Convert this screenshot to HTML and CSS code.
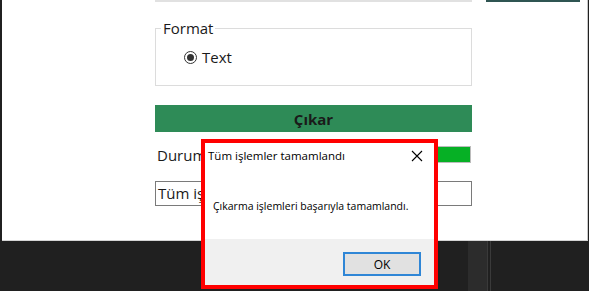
FILE: index.html
```html
<!DOCTYPE html>
<html lang="tr">
<head>
    <meta charset="UTF-8">
    <meta name="viewport" content="width=device-width, initial-scale=1.0">
    <title>Çıkar</title>
    <link rel="stylesheet" href="styles.css">
</head>
<body>

<div class="window">
    <div class="top-row">
        <div class="top-input"></div>
        <div class="top-button"></div>
    </div>

    <div class="form">
        <fieldset class="group">
            <legend>Format</legend>
            <label class="radio"><span class="radio-mark"></span>Text</label>
        </fieldset>

        <button class="extract">Çıkar</button>

        <div class="status-row">
            <span class="status-label">Durum</span>
            <div class="progress"><div class="progress-fill"></div></div>
        </div>

        <div class="log-box">Tüm işlemler tamamlandı</div>
    </div>
</div>

<div class="taskbar">
    <div class="task-slot"></div>
    <div class="task-line"></div>
    <div class="task-line"></div>
</div>

<div class="dialog">
    <div class="dialog-title">
        <span>Tüm işlemler tamamlandı</span>
        <svg class="close-icon" width="12" height="12" viewBox="0 0 12 12">
            <path d="M1 1 L11 11 M11 1 L1 11" stroke="#000" stroke-width="1.1" fill="none"/>
        </svg>
    </div>
    <div class="dialog-body">Çıkarma işlemleri başarıyla tamamlandı.</div>
    <div class="dialog-footer">
        <button class="ok-button">OK</button>
    </div>
</div>

</body>
</html>
```

FILE: styles.css
```css
body {
    margin: 0;
    background-color: #202020;
    font-family: "Open Sans", "Noto Sans", sans-serif;
    color: #1a1a1a;
    height: 291px;
    overflow: hidden;
}

.window {
    margin-left: 2px;
    width: 585px;
    height: 240px;
    background-color: white;
    border-right: 1px solid #c8c8c8;
    border-bottom: 1px solid #d4d4d4;
}

.top-row {
    display: flex;
    height: 2px;
    margin-left: 153px;
}

.top-input {
    width: 317px;
    background-color: #e1e1e1;
}

.top-button {
    width: 94px;
    margin-left: 14px;
    background-color: #2f5552;
}

.form {
    margin-left: 153px;
    width: 317px;
}

.group {
    margin: 18px 0 0 0;
    padding: 0 0 18px 0;
    border: 1px solid #dcdcdc;
}

.group legend {
    margin-left: 5px;
    padding: 0 2px;
    font-size: 15px;
    line-height: 16px;
}

.radio {
    display: flex;
    align-items: center;
    gap: 5px;
    margin: 11px 0 0 28px;
    font-size: 15px;
    line-height: 20px;
}

.radio-mark {
    width: 11px;
    height: 11px;
    border: 1px solid #333;
    border-radius: 50%;
    display: flex;
    align-items: center;
    justify-content: center;
}

.radio-mark::after {
    content: "";
    width: 7px;
    height: 7px;
    border-radius: 50%;
    background-color: #333;
}

.extract {
    display: block;
    width: 317px;
    height: 27px;
    margin-top: 19px;
    border: none;
    background-color: #2e8b57;
    color: #1a1a1a;
    font-family: inherit;
    font-size: 15px;
    font-weight: bold;
    padding: 0;
}

.status-row {
    display: flex;
    align-items: center;
    height: 17px;
    margin-top: 14px;
}

.status-label {
    font-size: 15px;
    margin-left: 2px;
}

.progress {
    margin-left: auto;
    margin-right: 1px;
    width: 254px;
    height: 15px;
    border: 1px solid #bcbcbc;
    background-color: #e6e6e6;
}

.progress-fill {
    height: 100%;
    background-color: #06b025;
}

.log-box {
    box-sizing: border-box;
    height: 25px;
    margin-top: 18px;
    border: 1px solid #7a7a7a;
    padding: 3px 0 0 2px;
    font-size: 15px;
    line-height: 16px;
    white-space: nowrap;
    overflow: hidden;
}

.taskbar {
    display: flex;
    height: 50px;
    padding-left: 468px;
}

.task-slot {
    width: 19px;
    background-color: #2c2c2c;
}

.task-line {
    width: 1px;
    margin-right: 2px;
    background-color: #3a3a3a;
}

.dialog {
    position: absolute;
    left: 201px;
    top: 139px;
    box-sizing: border-box;
    width: 237px;
    height: 150px;
    border: 4px solid #ff0000;
    background-color: white;
    display: flex;
    flex-direction: column;
    font-size: 11.5px;
    color: #000;
}

.dialog-title {
    display: flex;
    align-items: center;
    justify-content: space-between;
    height: 25px;
    padding: 0 6px 0 3px;
    white-space: nowrap;
}

.close-icon {
    margin-right: 5px;
}

.dialog-body {
    flex: 1;
    padding: 33px 0 0 8px;
    font-size: 10.5px;
    line-height: 10px;
    white-space: nowrap;
}

.dialog-footer {
    display: flex;
    justify-content: flex-end;
    height: 46px;
    background-color: #f0f0f0;
}

.ok-button {
    width: 78px;
    height: 24px;
    margin: 13px 13px 0 0;
    border: 2px solid #2f86d6;
    background-color: #e1e1e1;
    font-family: inherit;
    font-size: 12px;
    color: #000;
    padding: 0;
}
```
